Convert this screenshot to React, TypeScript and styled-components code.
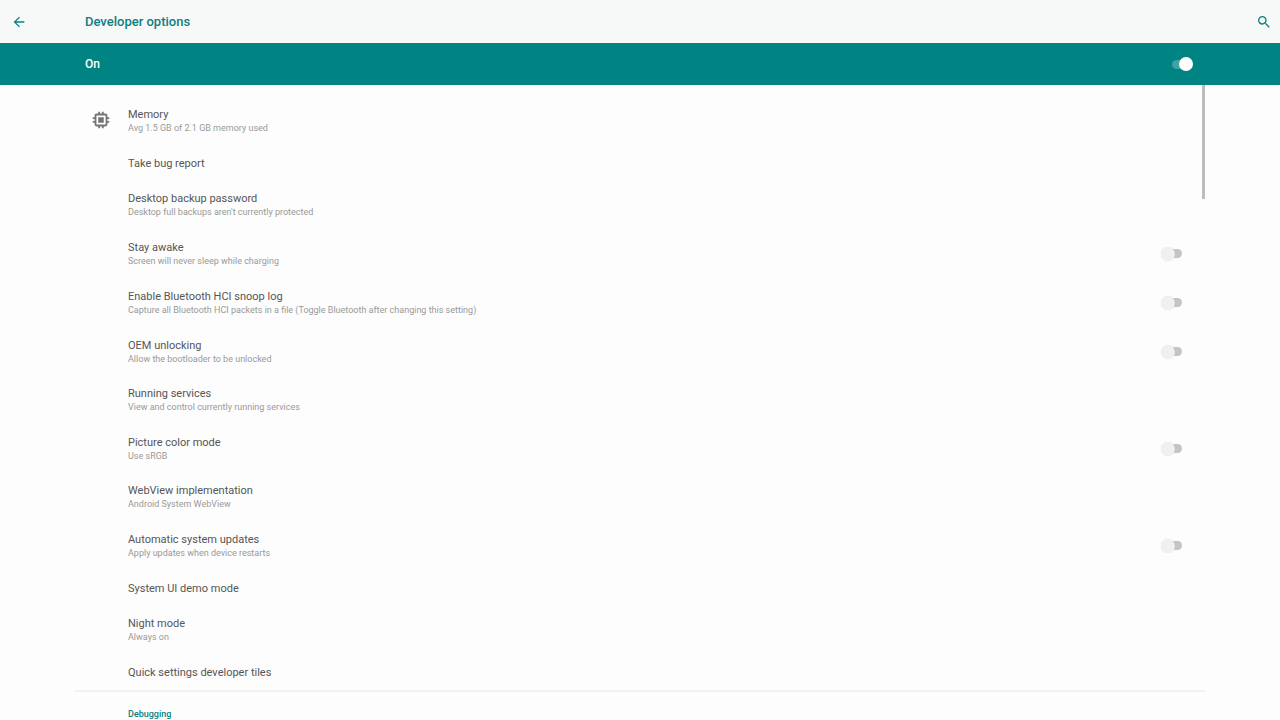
import React from "react";
import styled, { createGlobalStyle } from "styled-components";

const GlobalStyle = createGlobalStyle`
  *, *::before, *::after { box-sizing: border-box; }
  body { margin: 0; background: #fdfdfd; font-family: Roboto, "Liberation Sans", sans-serif; }
`;

const Screen = styled.div`
  display: flex;
  flex-direction: column;
  height: 100vh;
  overflow: hidden;
  background: #fdfdfd;
`;

const AppBar = styled.header`
  display: grid;
  grid-template-columns: 85px 1fr auto;
  align-items: center;
  flex: none;
  height: 43px;
  padding-right: 8px;
  background: #f7f8f8;
  color: #0c8080;
`;

const PageTitle = styled.h1`
  margin: 0;
  font-size: 13px;
  line-height: 20px;
  font-weight: 500;
`;

const IconButton = styled.button`
  display: flex;
  justify-self: start;
  margin: 0 0 0 11px;
  padding: 0;
  border: 0;
  background: none;
  color: inherit;
`;

const MasterSwitch = styled.label`
  display: flex;
  align-items: center;
  justify-content: space-between;
  flex: none;
  height: 42px;
  padding: 0 87px 0 85px;
  background: #008383;
  color: #fff;
  font-size: 12px;
  line-height: 16px;
  font-weight: 500;
`;

const Switch = styled.input`
  appearance: none;
  display: flex;
  align-items: center;
  flex: none;
  width: 21px;
  height: 14px;
  margin: 0;

  &::before {
    content: "";
    width: 17px;
    height: 9px;
    margin-left: 4px;
    border-radius: 5px;
    background: #c4c4c4;
  }

  &::after {
    content: "";
    flex: none;
    width: 14px;
    height: 14px;
    margin-left: -21px;
    border-radius: 50%;
    background: #f0f0f0;
    box-shadow: 0 0 1px rgba(0, 0, 0, 0.12);
  }

  &:checked::before {
    margin-left: 0;
    background: #40a2a2;
  }

  &:checked::after {
    margin-left: -10px;
    background: #fff;
    box-shadow: none;
  }
`;

const Content = styled.main`
  position: relative;
  flex: 1;
  min-height: 0;
  margin: 0 75px;
  padding-top: 11px;
  overflow: hidden;
`;

const ScrollThumb = styled.div`
  position: absolute;
  top: 0;
  right: 0;
  width: 3px;
  height: 18%;
  background: #bdbdbd;
`;

const OptionList = styled.ul`
  margin: 0;
  padding: 0;
  border-bottom: 2px solid #f1f1f1;
  list-style: none;
`;

const Option = styled.li<{ $height: number; $single: boolean }>`
  display: grid;
  grid-template-columns: 53px 1fr auto;
  align-items: center;
  min-height: ${(p) => p.$height}px;
  padding: ${(p) => (p.$single ? 2 : 0)}px 23px 0 0;
`;

const OptionIcon = styled.span`
  display: flex;
  padding: 0 0 1px 15px;
  color: #757575;
`;

const OptionTitle = styled.label`
  display: block;
  color: #555;
  font-size: 11px;
  line-height: 14px;
`;

const OptionSummary = styled.p`
  margin: 0;
  color: #999;
  font-size: 9px;
  line-height: 12px;
`;

const SectionTitle = styled.h2`
  margin: 0;
  padding: 15px 0 0 53px;
  color: #0c8080;
  font-size: 9px;
  line-height: 14px;
  font-weight: 500;
`;

const ArrowBackIcon = () => (
  <svg width="16" height="16" viewBox="0 0 24 24" fill="currentColor" aria-hidden="true">
    <path d="M20 11H7.83l5.59-5.59L12 4l-8 8 8 8 1.41-1.41L7.83 13H20v-2z" />
  </svg>
);

const SearchIcon = () => (
  <svg width="16" height="16" viewBox="0 0 24 24" fill="currentColor" aria-hidden="true">
    <path d="M15.5 14h-.79l-.28-.27A6.47 6.47 0 0 0 16 9.5 6.5 6.5 0 1 0 9.5 16c1.61 0 3.09-.59 4.23-1.57l.27.28v.79l5 4.99L20.49 19l-4.99-5zm-6 0C7.01 14 5 11.99 5 9.5S7.01 5 9.5 5 14 7.01 14 9.5 11.99 14 9.5 14z" />
  </svg>
);

const MemoryIcon = () => (
  <svg width="22" height="22" viewBox="0 0 24 24" fill="currentColor" aria-hidden="true">
    <path d="M15 9H9v6h6V9zm6 2V9h-2V7c0-1.100-.9-2-2-2h-2V3h-2v2h-2V3H9v2H7c-1.100 0-2 .9-2 2v2H3v2h2v2H3v2h2v2c0 1.100.9 2 2 2h2v2h2v-2h2v2h2v-2h2c1.100 0 2-.9 2-2v-2h2v-2h-2v-2h2zm-4 6H7V7h10v10z" />
  </svg>
);

interface OptionData {
  id: string;
  title: string;
  summary?: string;
  icon?: React.ReactNode;
  toggle?: boolean;
}

const options: OptionData[] = [
  { id: "memory", title: "Memory", summary: "Avg 1.5 GB of 2.1 GB memory used", icon: <MemoryIcon /> },
  { id: "bug-report", title: "Take bug report" },
  { id: "backup", title: "Desktop backup password", summary: "Desktop full backups aren't currently protected" },
  { id: "awake", title: "Stay awake", summary: "Screen will never sleep while charging", toggle: true },
  {
    id: "hci",
    title: "Enable Bluetooth HCI snoop log",
    summary: "Capture all Bluetooth HCI packets in a file (Toggle Bluetooth after changing this setting)",
    toggle: true,
  },
  { id: "oem", title: "OEM unlocking", summary: "Allow the bootloader to be unlocked", toggle: true },
  { id: "services", title: "Running services", summary: "View and control currently running services" },
  { id: "color", title: "Picture color mode", summary: "Use sRGB", toggle: true },
  { id: "webview", title: "WebView implementation", summary: "Android System WebView" },
  { id: "updates", title: "Automatic system updates", summary: "Apply updates when device restarts", toggle: true },
  { id: "demo", title: "System UI demo mode" },
  { id: "night", title: "Night mode", summary: "Always on" },
  { id: "tiles", title: "Quick settings developer tiles" },
];

/* Rows that carry an icon or a switch are a touch taller than text-only ones. */
const rowHeight = (o: OptionData) => (!o.summary ? 36 : o.icon || o.toggle ? 49 : 48);

const OptionRow = ({ option }: { option: OptionData }) => (
  <Option $height={rowHeight(option)} $single={!option.summary}>
    <OptionIcon>{option.icon}</OptionIcon>
    <div>
      <OptionTitle as={option.toggle ? "label" : "span"} {...(option.toggle ? { htmlFor: option.id } : {})}>
        {option.title}
      </OptionTitle>
      {option.summary && <OptionSummary>{option.summary}</OptionSummary>}
    </div>
    {option.toggle && <Switch type="checkbox" role="switch" id={option.id} />}
  </Option>
);

export default function App() {
  return (
    <>
      <GlobalStyle />
      <Screen>
        <AppBar>
          <IconButton type="button" aria-label="Navigate up">
            <ArrowBackIcon />
          </IconButton>
          <PageTitle>Developer options</PageTitle>
          <IconButton type="button" aria-label="Search">
            <SearchIcon />
          </IconButton>
        </AppBar>
        <MasterSwitch>
          On
          <Switch type="checkbox" role="switch" defaultChecked />
        </MasterSwitch>
        <Content>
          <OptionList>
            {options.map((o) => (
              <OptionRow key={o.id} option={o} />
            ))}
          </OptionList>
          <SectionTitle>Debugging</SectionTitle>
          <ScrollThumb />
        </Content>
      </Screen>
    </>
  );
}
